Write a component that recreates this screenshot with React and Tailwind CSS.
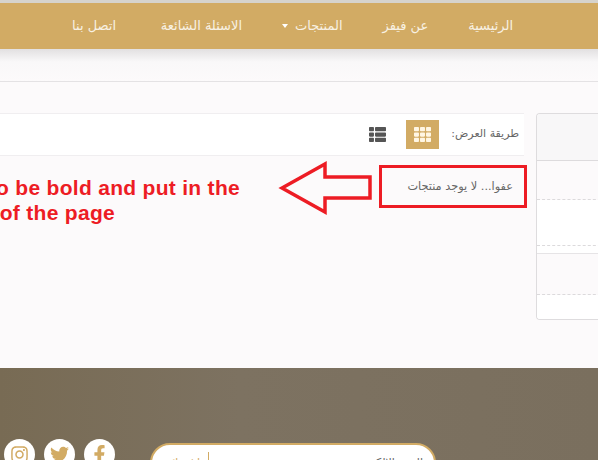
import React from 'react';
import { FaTh, FaThList, FaInstagram, FaTwitter, FaFacebookF } from 'react-icons/fa';

const arabic = { fontFamily: '"DejaVu Sans", sans-serif' };

const NavItem = ({ label, caret, width = '' }) => (
    <a className={`flex items-center gap-[7px] text-[13px] text-[#f8f1e3] whitespace-nowrap ${width}`}>
        {label}
        {caret && <span className="w-0 h-0 border-x-[3px] border-x-transparent border-t-[4px] border-t-white" />}
    </a>
);

const SocialIcon = ({ children }) => (
    <div className="w-[31px] h-[31px] rounded-full bg-white flex items-center justify-center text-[#d2ab64] text-[19px]">
        {children}
    </div>
);

const App = () => {
    return (
        <div className="relative h-[460px] w-[598px] overflow-hidden bg-[#fcfafb] flex flex-col font-['Liberation_Sans',sans-serif]">
            <div className="h-[3px] shrink-0 bg-[#d6d3cc]" />

            {/* navbar */}
            <nav dir="rtl" className="h-[46px] shrink-0 bg-[#d2ab64] flex items-center pr-[85px] gap-[40px]" style={arabic}>
                <NavItem label="الرئيسية" />
                <NavItem label="عن فيفز" />
                <NavItem label="المنتجات" caret />
                <NavItem label="الاسئلة الشائعة" width="w-[86px]" />
                <NavItem label="اتصل بنا" />
            </nav>

            {/* breadcrumb strip */}
            <div className="h-[33px] shrink-0 border-b border-[#e4e2e4] bg-gradient-to-b from-[#e2e0e1] via-[#f9f8f9] via-40% to-[#fcfafb]" />

            {/* content */}
            <div className="h-[286px] shrink-0 pt-[31px] flex items-start">
                <div className="w-[524px] shrink-0">
                    <div dir="rtl" className="h-[43px] bg-white border-y border-[#f0eef0] flex items-center pr-[5px]" style={arabic}>
                        <span className="text-[11px] text-[#666]">طريقة العرض:</span>
                        <div className="mr-[12px] w-[33px] h-[29px] bg-[#d2ab64] flex items-center justify-center text-[#fff6e4] text-[17px]">
                            <FaTh />
                        </div>
                        <div className="mr-[20px] text-[#555] text-[17px]">
                            <FaThList />
                        </div>
                    </div>
                    <div dir="rtl" className="pt-[24px] pr-[11px] text-[11.3px] leading-[14px] text-[#666]" style={arabic}>
                        عفوا... لا يوجد منتجات
                    </div>
                </div>

                {/* sidebar */}
                <div className="ml-[12px] w-[70px] shrink-0 h-[207px] rounded-l-[4px] border border-r-0 border-[#dedcde] bg-white flex flex-col overflow-hidden">
                    <div className="h-[47px] shrink-0 bg-[#f8f7f8] border-b border-[#dddbdd]" />
                    <div className="h-[39px] shrink-0 bg-[#fcfafb] border-b border-dashed border-[#dcdadc]" />
                    <div className="h-[46px] shrink-0 bg-white border-b border-dashed border-[#dcdadc]" />
                    <div className="h-[8px] shrink-0 bg-white border-b border-[#e6e4e6]" />
                    <div className="h-[41px] shrink-0 bg-[#fcfafb] border-b border-dashed border-[#dcdadc]" />
                    <div className="flex-1 bg-white" />
                </div>
            </div>

            {/* footer */}
            <footer className="flex-1 min-h-0 overflow-hidden bg-gradient-to-r from-[#786b54] via-[#7d7261] via-40% to-[#7a6f5e] pt-[71px] pl-[4px] flex items-start">
                <div className="flex gap-[9px] shrink-0">
                    <SocialIcon><FaInstagram /></SocialIcon>
                    <SocialIcon><FaTwitter /></SocialIcon>
                    <SocialIcon><FaFacebookF /></SocialIcon>
                </div>
                <div dir="rtl" className="ml-[35px] mt-[4px] w-[286px] h-[40px] shrink-0 bg-white rounded-[20px] border-2 border-[#d2ab64] flex items-start pt-[7px] pr-[11px] text-[11px] leading-[14px]" style={arabic}>
                    <span className="flex-1 mt-[4px] text-[#666]">البريد الالكتروني</span>
                    <span className="w-[57px] h-[26px] pt-[4px] pr-[8px] border-r border-[#d2ab64] text-[#d2ab64]">اشترك</span>
                </div>
            </footer>

            {/* annotation drawn over the page */}
            <div className="absolute left-[379px] top-[165px] w-[148px] h-[43px] border-[3px] border-[#ed1c24]" />
            <svg className="absolute left-[278px] top-[161px]" width="96" height="54" viewBox="0 0 96 54" fill="none">
                <path d="M4 27 L47 3 L47 16 L92 16 L92 37 L47 37 L47 51 Z" stroke="#ed1c24" strokeWidth="3.5" strokeLinejoin="miter" />
            </svg>
            <div className="absolute left-0 top-[175px] w-[240px] text-[#ed1c24] font-bold text-[21px] tracking-[0.3px] leading-[25px] whitespace-nowrap flex flex-col items-end">
                <div>to be bold and put in the</div>
                <div className="mr-[125px]">of the page</div>
            </div>
        </div>
    );
};

export default App;
